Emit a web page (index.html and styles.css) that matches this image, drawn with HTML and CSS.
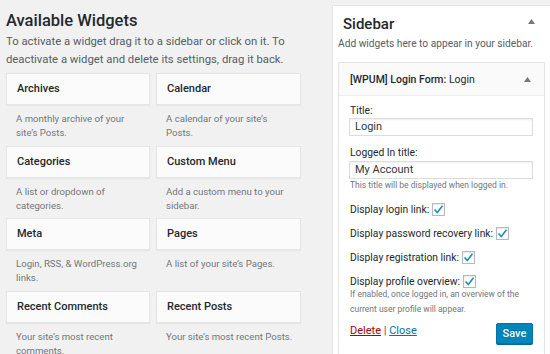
FILE: index.html
```html
<!DOCTYPE html>
<html>
<head>
<meta charset="utf-8">
<link rel="stylesheet" href="styles.css">
</head>
<body>
<div class="page">
  <section class="available">
    <h2 class="title">Available Widgets</h2>
    <p class="intro">To activate a widget drag it to a sidebar or click on it. To<br>deactivate a widget and delete its settings, drag it back.</p>
    <div class="grid">
      <div class="widget"><div class="widget-top">Archives</div><div class="widget-desc">A monthly archive of your<br>site’s Posts.</div></div>
      <div class="widget"><div class="widget-top">Calendar</div><div class="widget-desc">A calendar of your site’s<br>Posts.</div></div>
      <div class="widget"><div class="widget-top">Categories</div><div class="widget-desc">A list or dropdown of<br>categories.</div></div>
      <div class="widget"><div class="widget-top">Custom Menu</div><div class="widget-desc">Add a custom menu to your<br>sidebar.</div></div>
      <div class="widget"><div class="widget-top">Meta</div><div class="widget-desc">Login, RSS, &amp; WordPress.org<br>links.</div></div>
      <div class="widget"><div class="widget-top">Pages</div><div class="widget-desc">A list of your site’s Pages.</div></div>
      <div class="widget"><div class="widget-top">Recent Comments</div><div class="widget-desc">Your site’s most recent<br>comments.</div></div>
      <div class="widget"><div class="widget-top">Recent Posts</div><div class="widget-desc">Your site’s most recent Posts.</div></div>
    </div>
  </section>
  <section class="sidebar">
    <div class="sidebar-head">
      <h2 class="sidebar-title">Sidebar</h2>
      <svg class="arrow" width="7" height="5" viewBox="0 0 7 5"><path d="M0 5 L3.5 0 L7 5 Z" fill="#72777c"/></svg>
    </div>
    <p class="sidebar-desc">Add widgets here to appear in your sidebar.</p>
    <div class="open-widget">
      <div class="ow-head">
        <span class="ow-title"><b>[WPUM] Login Form:</b> Login</span>
        <svg class="arrow" width="7" height="5" viewBox="0 0 7 5"><path d="M0 5 L3.5 0 L7 5 Z" fill="#72777c"/></svg>
      </div>
      <div class="ow-body">
        <div class="label">Title:</div>
        <div class="input">Login</div>
        <div class="label label-gap">Logged In title:</div>
        <div class="input input-gap">My Account</div>
        <div class="help">This title will be displayed when logged in.</div>
        <div class="check-row first">Display login link:<span class="checkbox"><svg width="11" height="11" viewBox="0 0 11 11"><path d="M1.5 5.5 L4.3 8.5 L9.5 1.8" fill="none" stroke="#1e8cbe" stroke-width="1.6"/></svg></span></div>
        <div class="check-row">Display password recovery link:<span class="checkbox"><svg width="11" height="11" viewBox="0 0 11 11"><path d="M1.5 5.5 L4.3 8.5 L9.5 1.8" fill="none" stroke="#1e8cbe" stroke-width="1.6"/></svg></span></div>
        <div class="check-row">Display registration link:<span class="checkbox"><svg width="11" height="11" viewBox="0 0 11 11"><path d="M1.5 5.5 L4.3 8.5 L9.5 1.8" fill="none" stroke="#1e8cbe" stroke-width="1.6"/></svg></span></div>
        <div class="check-row">Display profile overview:<span class="checkbox"><svg width="11" height="11" viewBox="0 0 11 11"><path d="M1.5 5.5 L4.3 8.5 L9.5 1.8" fill="none" stroke="#1e8cbe" stroke-width="1.6"/></svg></span></div>
        <div class="help help-two">If enabled, once logged in, an overview of the<br>current user profile will appear.</div>
        <div class="actions">
          <div class="links"><a class="delete" href="#">Delete</a> | <a class="close" href="#">Close</a></div>
          <button class="save">Save</button>
        </div>
      </div>
    </div>
  </section>
</div>
</body>
</html>
```
FILE: styles.css
```css
html, body {
  margin: 0;
  width: 550px;
  height: 354px;
  overflow: hidden;
  background: #f1f1f1;
  font-family: Roboto, "Liberation Sans", Arial, sans-serif;
  color: #23282d;
}

.page {
  display: flex;
  align-items: flex-start;
}

.available {
  width: 295px;
  margin-left: 6px;
  flex-shrink: 0;
}

.title {
  margin: 11px 0 0;
  font-size: 16.5px;
  line-height: 20px;
  font-weight: 500;
}

.intro {
  margin: 2px 0 0;
  font-size: 11.3px;
  line-height: 18px;
  color: #555d66;
  white-space: nowrap;
}

.grid {
  margin-top: 4px;
  display: grid;
  grid-template-columns: 144px 145px;
  column-gap: 6px;
}

.widget-top {
  height: 32px;
  box-sizing: border-box;
  border: 1px solid #e5e5e5;
  background: #fbfbfb;
  box-shadow: 0 1px 1px rgba(0, 0, 0, 0.04);
  padding-left: 10px;
  font-size: 11px;
  font-weight: 500;
  line-height: 30px;
}

.widget-desc {
  height: 40.67px;
  box-sizing: border-box;
  padding: 7px 0 0 10px;
  font-size: 9.6px;
  line-height: 14px;
  color: #72777c;
  white-space: nowrap;
}

.sidebar {
  margin-left: 31px;
  margin-top: 5px;
  width: 219px;
  height: 360px;
  flex-shrink: 0;
  box-sizing: border-box;
  background: #fff;
  border: 1px solid #e5e5e5;
  box-shadow: 0 1px 1px rgba(0, 0, 0, 0.04);
}

.sidebar-head {
  display: flex;
  justify-content: space-between;
  align-items: center;
  padding: 8px 15px 0 10px;
}

.sidebar-title {
  margin: 0;
  font-size: 15px;
  line-height: 20px;
  font-weight: 500;
}

.arrow {
  display: block;
}

.sidebar-head .arrow {
  margin-top: -5px;
}

.sidebar-desc {
  margin: 2px 0 10px;
  padding-left: 5px;
  font-size: 10.2px;
  line-height: 16px;
  color: #555d66;
  white-space: nowrap;
}

.open-widget {
  margin: 0 5px;
  height: 300px;
  border: 1px solid #e5e5e5;
  box-shadow: 0 1px 1px rgba(0, 0, 0, 0.04);
}

.ow-head {
  height: 32px;
  display: flex;
  align-items: center;
  justify-content: space-between;
  padding: 0 13px 0 11px;
  background: #fafafa;
  border-bottom: 1px solid #eee;
  font-size: 10.5px;
}

.ow-title b {
  font-weight: 500;
}

.ow-body {
  padding: 8px 11px 0 10px;
}

.label {
  font-size: 10.3px;
  line-height: 14px;
  padding-left: 1px;
}

.label-gap {
  margin-top: 10px;
}

.input {
  height: 18px;
  box-sizing: border-box;
  border: 1px solid #ddd;
  box-shadow: inset 0 1px 2px rgba(0, 0, 0, 0.07);
  padding-left: 5px;
  font-size: 11px;
  line-height: 16px;
  color: #32373c;
}

.input-gap {
  margin-top: 1px;
}

.help {
  font-size: 8.5px;
  line-height: 12px;
  color: #72777c;
  padding-left: 1px;
  white-space: nowrap;
}

.check-row {
  display: flex;
  align-items: center;
  height: 16px;
  margin-top: 8px;
  font-size: 10.3px;
  padding-left: 1px;
}

.check-row.first {
  margin-top: 10px;
}

.checkbox {
  width: 13px;
  height: 13px;
  box-sizing: border-box;
  margin-left: 3px;
  border: 1px solid #b4b9be;
  background: #fff;
  box-shadow: inset 0 1px 2px rgba(0, 0, 0, 0.1);
  display: flex;
  align-items: center;
  justify-content: center;
}

.help-two {
  margin-top: -2px;
  line-height: 15px;
}

.actions {
  display: flex;
  justify-content: space-between;
  align-items: flex-start;
  margin-top: 6px;
}

.links {
  font-size: 11px;
  line-height: 16px;
  color: #555;
  padding-left: 1px;
}

.delete {
  color: #a00;
}

.close {
  color: #0073aa;
}

.save {
  width: 37px;
  height: 21px;
  padding: 0;
  border: 1px solid #0073aa;
  border-radius: 2px;
  background: #0085ba;
  box-shadow: 0 1px 0 #006799;
  color: #fff;
  font-family: Roboto, "Liberation Sans", Arial, sans-serif;
  font-size: 11px;
  font-weight: 500;
  text-shadow: 0 -1px 1px #006799;
}
```
